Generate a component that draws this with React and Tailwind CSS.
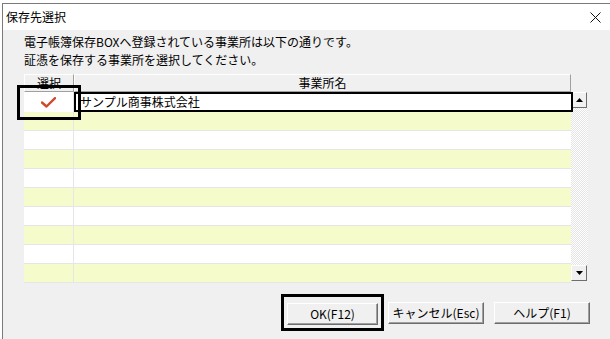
import React from 'react';

const rows = Array.from({ length: 10 }, (_, i) => i);

function Check() {
  return (
    <svg width="15" height="11" viewBox="0 0 15 11">
      <path d="M1 5.5 L5.5 9.5 L14 1.2" fill="none" stroke="#cc4a2e" strokeWidth="2.4" strokeLinejoin="round" strokeLinecap="round" />
    </svg>
  );
}

function Arrow({ up }) {
  return (
    <div className="w-[16px] h-[16px] bg-[#f0f0f0] border border-t-white border-l-white border-r-[#6d6d6d] border-b-[#6d6d6d] flex items-center justify-center">
      <svg width="7" height="4" viewBox="0 0 7 4">
        {up ? <path d="M0 4 L3.5 0 L7 4 Z" fill="#000" /> : <path d="M0 0 L7 0 L3.5 4 Z" fill="#000" />}
      </svg>
    </div>
  );
}

function Btn({ children, w }) {
  return (
    <button className={`${w} h-[22px] bg-[#f0f0f0] border border-t-white border-l-white border-r-[#6d6d6d] border-b-[#6d6d6d] shadow-[inset_-1px_-1px_0_#a0a0a0] text-[12px] text-black leading-none`}>
      {children}
    </button>
  );
}

export default function App() {
  return (
    <div className="w-[610px] h-[339px] bg-white overflow-hidden relative" style={{ fontFamily: '"Noto Sans CJK JP", "Liberation Sans", sans-serif' }}>
      <div className="ml-[2px] mt-[3px] h-[336px] border-l border-t border-[#7a7a7a] flex flex-col">
        {/* title bar */}
        <div className="h-[26px] bg-white flex items-center justify-between pl-[3px] pr-[9px]">
          <span className="text-[12px] text-black">保存先選択</span>
          <svg width="11" height="11" viewBox="0 0 11 11">
            <path d="M0.5 0.5 L10.5 10.5 M10.5 0.5 L0.5 10.5" stroke="#111" strokeWidth="1" />
          </svg>
        </div>

        {/* body */}
        <div className="flex-1 bg-[#f0f0f0] pt-[3px] pl-[21px] relative">
          <p className="text-[12px] leading-[18px] text-black">電子帳簿保存BOXへ登録されている事業所は以下の通りです。</p>
          <p className="text-[12px] leading-[18px] text-black">証憑を保存する事業所を選択してください。</p>

          {/* table */}
          <div className="mt-[5px] w-[564px]">
            <div className="flex h-[18px]">
              <div className="w-[50px] bg-[#f0f0f0] border border-t-white border-l-white border-r-[#a0a0a0] border-b-[#a0a0a0] text-[12px] leading-[16px] text-center">選択</div>
              <div className="w-[497px] bg-[#f0f0f0] border border-t-white border-l-white border-r-[#a0a0a0] border-b-[#a0a0a0] text-[12px] leading-[16px] text-center">事業所名</div>
            </div>
            <div className="flex">
              <div className="w-[547px] h-[189px] overflow-visible">
                {rows.map(i => (
                  i === 0 ? (
                    <div key={i} className="flex h-[20px] bg-white">
                      <div className="w-[50px] border-r border-[#e6e6e6] flex items-center justify-center">
                        <Check />
                      </div>
                      <div className="flex-1 h-[20px] border-2 border-black bg-white text-[12px] leading-[16px] pl-[4px] -mr-[2px] relative z-10">サンプル商事株式会社</div>
                    </div>
                  ) : (
                    <div key={i} className={`flex h-[19px] border-b border-[#e6e6e6] ${i % 2 === 1 ? 'bg-[#f5fbcb]' : 'bg-white'}`}>
                      <div className="w-[50px] border-r border-[#e6e6e6]" />
                      <div className="flex-1" />
                    </div>
                  )
                ))}
              </div>
              <div className="w-[17px] h-[189px] flex flex-col">
                <Arrow up />
                <div className="flex-1 bg-[repeating-conic-gradient(#ffffff_0%_25%,#e4e4e4_0%_50%)] bg-size-[2px_2px]" />
                <Arrow />
              </div>
            </div>
          </div>

          {/* buttons */}
          <div className="flex justify-end items-center gap-[4px] pr-[20px] mt-[13px]">
            <div className="border-[3px] border-black p-[3px]">
              <Btn w="w-[91px]">OK(F12)</Btn>
            </div>
            <Btn w="w-[96px]">キャンセル(Esc)</Btn>
            <div className="w-[2px]" />
            <Btn w="w-[96px]">ヘルプ(F1)</Btn>
          </div>

          {/* annotation box */}
          <div className="absolute left-[14px] top-[55px] w-[64px] h-[35px] border-[3px] border-black pointer-events-none z-20" />
        </div>
      </div>
    </div>
  );
}
